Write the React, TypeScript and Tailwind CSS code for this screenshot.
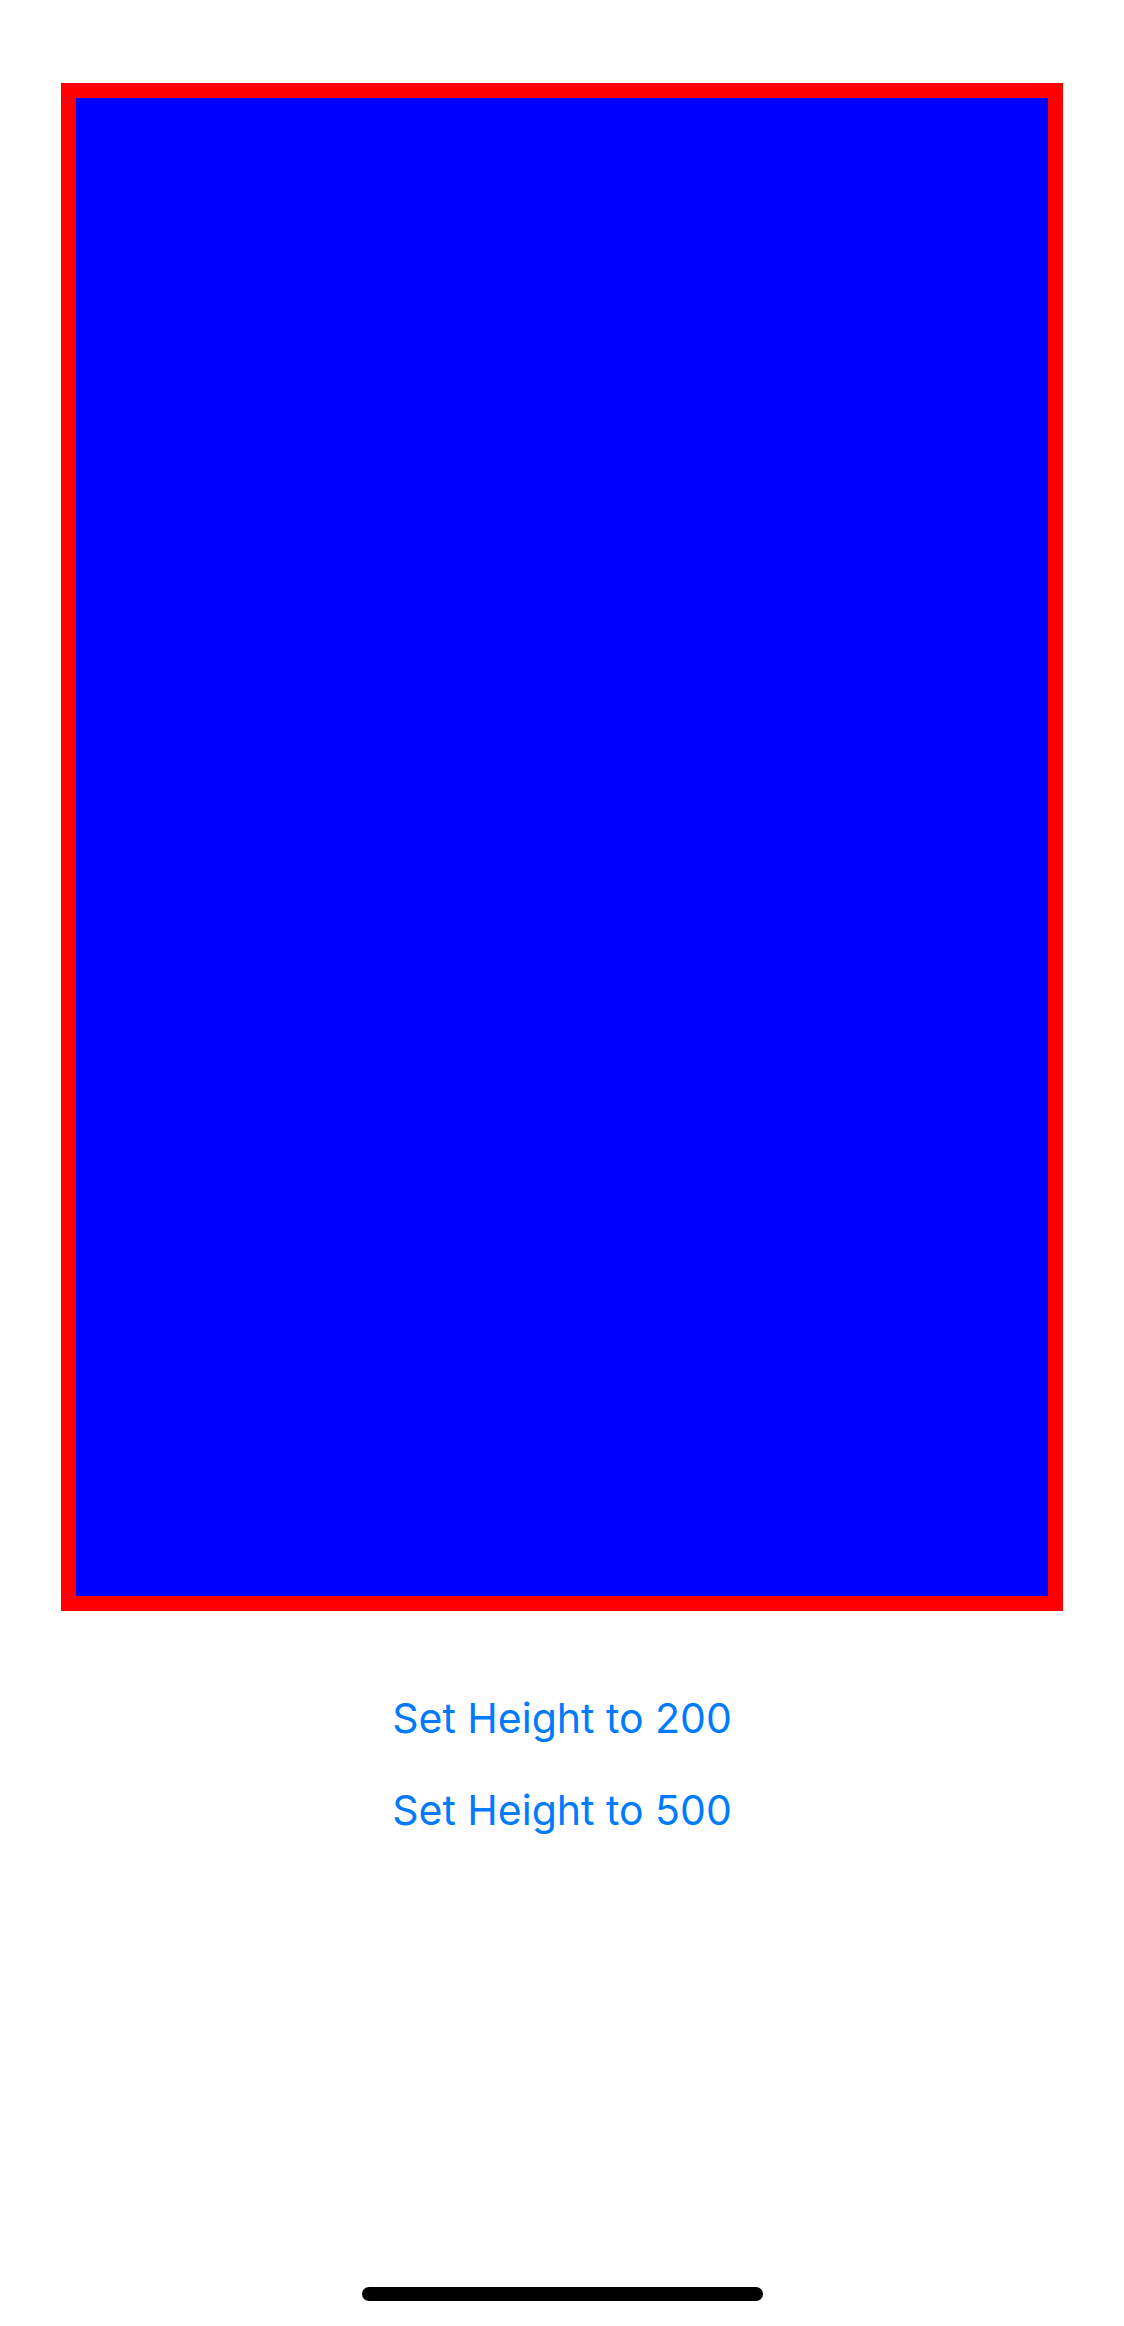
export default function App() {
  return (
    <div
      className="relative flex flex-col items-center h-[2326px] bg-white pt-[83px]"
      style={{ fontFamily: 'Inter, "Noto Sans", sans-serif' }}
    >
      {/* Resizable box */}
      <div className="w-[1002px] h-[1528px] border-[15px] border-[#ff0000] bg-[#0000ff]" />

      {/* Buttons */}
      <div className="flex flex-col items-center mt-[84px] gap-[46px]">
        <button className="text-[41px] leading-[46px] text-[#007aff]">Set Height to 200</button>
        <button className="text-[41px] leading-[46px] text-[#007aff]">Set Height to 500</button>
      </div>

      {/* Home indicator */}
      <div className="mt-auto mb-[25px] w-[401px] h-[14px] rounded-full bg-black" />
    </div>
  );
}
